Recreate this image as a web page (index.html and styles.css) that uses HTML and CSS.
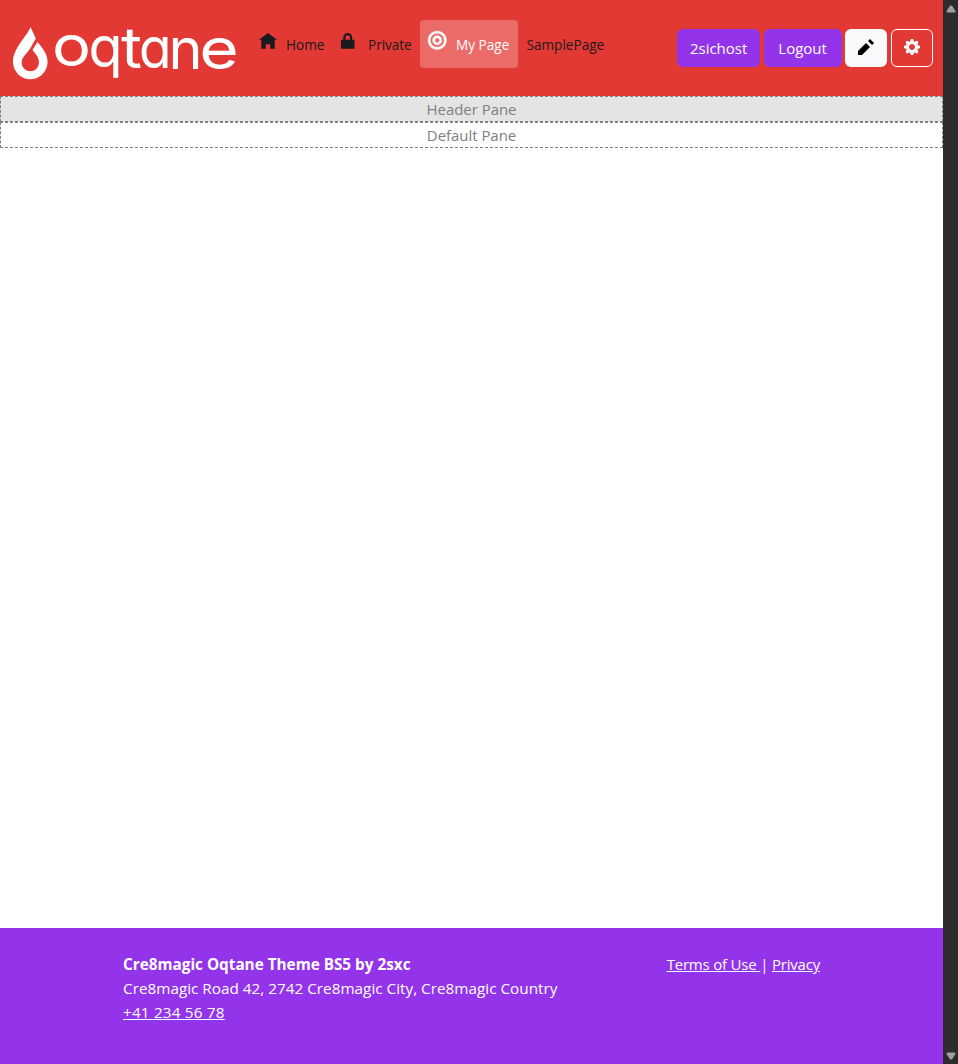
FILE: index.html
```html
<!DOCTYPE html>
<html lang="en">
<head>
<meta charset="utf-8">
<title>My Page</title>
<link rel="stylesheet" href="styles.css">
</head>
<body>
<div class="page">
  <header class="header">
    <a class="logo">
      <svg width="240" height="96" viewBox="10 0 240 96">
        <path class="drop" fill-rule="evenodd" d="M30.500 27C28 35 13 48 13 62a17.300 17.300 0 0 0 34.600 0C47.600 54 42 47.500 37.500 42L32.400 50C36 54 39 58 39 62.500a8.700 8.700 0 0 1-17.400 0C21.600 57.500 26 54.500 30 48.700L35.800 38.500Z"/>
        <text class="wordmark"><tspan x="52" y="66.300" textLength="39" lengthAdjust="spacingAndGlyphs">o</tspan><tspan x="88.500" y="67" textLength="34" lengthAdjust="spacingAndGlyphs">q</tspan><tspan x="121" y="67.500" textLength="21" lengthAdjust="spacingAndGlyphs">t</tspan><tspan x="139" y="67.500" textLength="32.500" lengthAdjust="spacingAndGlyphs">a</tspan><tspan x="168.500" y="68.500" textLength="34" lengthAdjust="spacingAndGlyphs">n</tspan><tspan x="199.300" y="69" textLength="39.500" lengthAdjust="spacingAndGlyphs">e</tspan></text>
      </svg>
    </a>
    <nav class="nav">
      <a class="nav-item home"><svg class="nav-icon" viewBox="0 0 8 8"><path d="M4 0l-4 3h1v4h2v-2h2v2h2v-4.030l1 .03-4-3z"/></svg><span>Home</span></a>
      <a class="nav-item private"><svg class="nav-icon" viewBox="0 0 8 8"><path d="M3 0c-1.100 0-2 .9-2 2v1h-1v4h6v-4h-1v-1c0-1.100-.9-2-2-2zm0 1c.56 0 1 .44 1 1v1h-2v-1c0-.56.44-1 1-1z"/></svg><span>Private</span></a>
      <a class="nav-item active"><svg class="nav-icon" viewBox="0 0 8 8"><path d="M4 0c-2.200 0-4 1.800-4 4s1.800 4 4 4 4-1.800 4-4-1.800-4-4-4zm0 1c1.660 0 3 1.340 3 3s-1.340 3-3 3-3-1.340-3-3 1.340-3 3-3zm0 1c-1.100 0-2 .9-2 2s.9 2 2 2 2-.9 2-2-.9-2-2-2zm0 1c.56 0 1 .44 1 1s-.44 1-1 1-1-.44-1-1 .44-1 1-1z"/></svg><span>My Page</span></a>
      <a class="nav-item sample"><span>SamplePage</span></a>
    </nav>
    <div class="actions">
      <button class="btn user">2sichost</button>
      <button class="btn logout">Logout</button>
      <button class="btn edit"><svg viewBox="0 0 8 8"><path d="M6 0l-1 1 2 2 1-1-2-2zm-2 2l-4 4v2h2l4-4-2-2z"/></svg></button>
      <button class="btn settings"><svg viewBox="0 0 8 8"><path d="M3.500 0l-.5 1.190-.31.13-1.190-.5-.69.69.5 1.190-.13.31-1.190.5v1l1.190.5.13.31-.5 1.190.69.69 1.190-.5.31.13.5 1.190h1l.5-1.190.31-.13 1.190.5.69-.69-.5-1.190.13-.31 1.190-.5v-1l-1.190-.5-.13-.31.5-1.190-.69-.69-1.190.5-.31-.13-.5-1.190h-1zm.5 2.500c.83 0 1.500.67 1.500 1.500s-.67 1.500-1.500 1.500-1.500-.67-1.500-1.500.67-1.500 1.500-1.500z"/></svg></button>
    </div>
  </header>
  <main class="main">
    <div class="pane pane-header">Header Pane</div>
    <div class="pane">Default Pane</div>
  </main>
  <footer class="footer">
    <address class="address">
      <strong>Cre8magic Oqtane Theme BS5 by 2sxc</strong>
      <span class="street">Cre8magic Road 42, 2742 Cre8magic City, Cre8magic Country</span>
      <a class="link phone">+41 234 56 78</a>
    </address>
    <div class="legal"><a class="link">Terms of Use </a>| <a class="link">Privacy</a></div>
  </footer>
</div>
<div class="scrollbar">
  <svg width="10" height="8" viewBox="0 0 10 8"><path d="M4 .8Q5 0 6 .8L9.500 6Q9.500 7.500 8.500 7.500H1.500Q.5 7.500.5 6Z"/></svg>
  <svg width="10" height="8" viewBox="0 0 10 8"><path d="M4 7.200Q5 8 6 7.200L9.500 2Q9.500.5 8.500.5H1.500Q.5.5.5 2Z"/></svg>
</div>
</body>
</html>
```
FILE: styles.css
```css
* { box-sizing: border-box; }
body {
  margin: 0;
  display: flex;
  height: 1064px;
  overflow: hidden;
  font-family: "Open Sans", "Noto Sans", sans-serif;
  font-size: 15px;
  line-height: 24px;
  background: #fff;
}
.page { width: 943px; display: flex; flex-direction: column; }
.header { height: 96px; background: #e33935; display: flex; align-items: flex-start; padding: 0 10px; }
.logo { display: block; width: 240px; }
.logo svg { display: block; }
.drop { fill: #fff; }
.wordmark { font-family: Inter, sans-serif; font-size: 56px; font-weight: 400; font-feature-settings: "cv11"; fill: #fff; }
.nav { display: flex; padding-top: 20px; font-size: 13.600px; color: #1b1b1b; white-space: nowrap; }
.nav-item { display: flex; height: 48px; padding: 13px 8px 0; border-radius: 4px; }
.nav-item span { line-height: 24px; }
.nav-icon { width: 18px; height: 18px; fill: currentColor; flex: none; margin: 0 9.500px 0 .5px; }
.home { width: 82px; }
.private { width: 88px; }
.private span { letter-spacing: -.05px; }
.active { width: 98px; background: #eb6b69; color: #fff; padding-left: 7px; }
.active .nav-icon { width: 18.500px; height: 18.500px; margin: -2.500px 10px 0 .5px; stroke: currentColor; stroke-width: .15; overflow: visible; }
.sample { padding-left: 8.500px; }
.actions { display: flex; gap: 3.700px; padding-top: 29px; margin-left: auto; }
.btn { height: 38px; padding: 0; border: 0; border-radius: 6px; display: flex; align-items: center; justify-content: center; font: inherit; color: #fff; background: #9333ea; }
.btn svg { width: 16px; height: 16px; fill: currentColor; margin-bottom: 2px; }
.user { width: 82.600px; }
.logout { width: 78px; }
.edit { width: 42px; background: #f8f9fa; color: #000; }
.settings { width: 42px; background: none; border: 1px solid #fff; }
.main { flex: 1; }
.pane { height: 26px; border: 1px dashed #808080; text-align: center; color: #808080; letter-spacing: -.04px; }
.pane-header { background: #e4e4e4; }
.footer { height: 136px; background: #9333ea; color: #fff; display: flex; justify-content: space-between; padding: 24px 123px 0; }
.address { display: flex; flex-direction: column; align-items: flex-start; font-size: 15.300px; font-style: normal; white-space: nowrap; }
.phone { letter-spacing: .18px; }
.legal { letter-spacing: -.2px; }
.link { text-decoration: underline; white-space: pre; }
.scrollbar { width: 15px; background: #2c2c2c; display: flex; flex-direction: column; justify-content: space-between; align-items: center; padding: 5px 0 4px; }
.scrollbar svg { fill: #9f9f9f; }
```
